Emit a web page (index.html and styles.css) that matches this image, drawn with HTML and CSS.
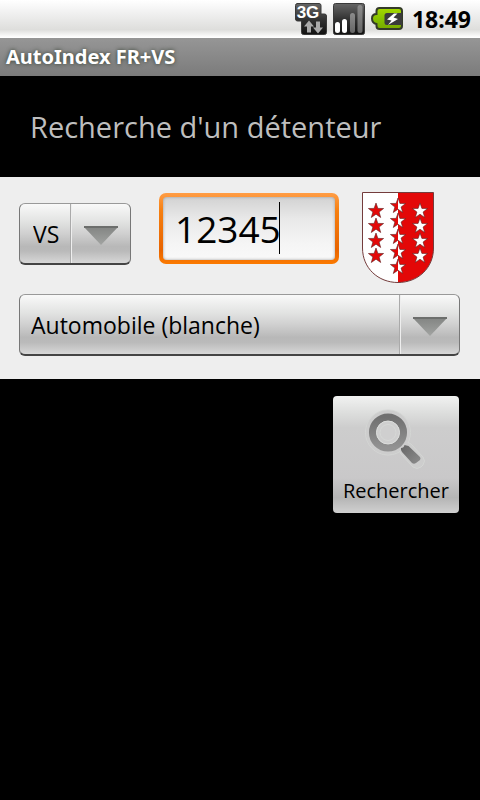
FILE: index.html
```html
<!DOCTYPE html>
<html lang="fr">
<head>
<meta charset="utf-8">
<meta name="viewport" content="width=device-width">
<title>AutoIndex FR+VS</title>
<link rel="stylesheet" href="styles.css">
</head>
<body>
<div class="status-bar">
  <svg class="status-icon" viewBox="0 0 32 32" aria-hidden="true">
    <defs>
      <linearGradient id="dark" x1="0" y1="0" x2="0" y2="1"><stop offset="0" stop-color="#666"/><stop offset=".5" stop-color="#333"/><stop offset="1" stop-color="#111"/></linearGradient>
      <linearGradient id="bar" x1="0" y1="0" x2="0" y2="1"><stop offset="0" stop-color="#8c8c8c"/><stop offset="1" stop-color="#666"/></linearGradient>
    </defs>
    <path d="M2 .5h22q2 0 2 2V11h3.500q2 0 2 2v16.500q0 2-2 2H8.500q-2 0-2-2V18H2.500q-2 0-2-2V2.500q0-2 2-2z" fill="url(#dark)" stroke="#3a3a3a"/>
    <text class="network" x="13" y="15">3G</text>
    <path d="M14 17.500l5 6h-3v6h-4v-6H9zM23 30.500l-5-6h3v-6h4v6h3z" fill="#aaa"/>
  </svg>
  <svg class="status-icon" viewBox="0 0 32 32" aria-hidden="true">
    <rect x=".5" y=".5" width="31" height="31" rx="2" fill="url(#dark)" stroke="#3a3a3a"/>
    <rect x="2" y="19" width="5" height="11" rx="2.500" fill="#fff"/>
    <rect x="9" y="16" width="5" height="14" rx="2.500" fill="#fff"/>
    <rect x="17" y="10" width="5" height="20" rx="2.500" fill="url(#bar)"/>
    <rect x="24.500" y="2" width="5" height="28" rx="2.500" fill="url(#bar)"/>
  </svg>
  <svg class="status-icon" viewBox="0 0 32 32" aria-hidden="true">
    <defs><linearGradient id="green" x1="0" y1="0" x2="0" y2="1"><stop offset="0" stop-color="#a5d900"/><stop offset=".6" stop-color="#82bd00"/><stop offset="1" stop-color="#78a800"/></linearGradient></defs>
    <path d="M8.500 5H28q3 0 3 3v15q0 3-3 3H8.500q-3 0-3-3v-2Q1 20 1 15.500T5.500 11V8q0-3 3-3z" fill="url(#green)" stroke="#333a28" stroke-width="2"/>
    <path d="M16 10h15v12H16q-2.500 0-2.500-2.500v-7Q13.500 10 16 10z" fill="#3a3a3a"/>
    <path d="M23 10.500l-7 6 4.500 1-3.500 4.500 10-6-4.500-1.500 4-4z" fill="#fff"/>
  </svg>
  <time class="clock">18:49</time>
</div>
<header class="title-bar">AutoIndex FR+VS</header>
<main>
  <h1 class="heading">Recherche d'un détenteur</h1>
  <form id="search" class="panel">
    <div class="plate-row">
      <div class="spinner spinner-short">
        <select aria-label="Canton"><option>VS</option><option>FR</option></select>
        <span class="spinner-arrow"><svg viewBox="0 0 34 19" aria-hidden="true"><path d="M0 1h34L17 19z" fill="url(#arrow)"/><path d="M0 1h34" stroke="#6c6e6c" stroke-width="2"/></svg></span>
      </div>
      <div class="number-field">
        <input type="text" inputmode="numeric" aria-label="Numéro de plaque" value="12345">
        <span class="caret"></span>
      </div>
      <svg class="shield" viewBox="0 0 72 91" role="img" aria-label="Valais">
        <defs>
          <linearGradient id="arrow" x1="0" y1="0" x2="0" y2="1"><stop offset="0" stop-color="#838583"/><stop offset="1" stop-color="#a2a4a2"/></linearGradient>
          <path id="star" d="M0-8L1.900-2.600 7.600-2.500 3.100 1 4.700 6.500 0 3.200-4.700 6.500-3.100 1-7.600-2.500-1.900-2.600z"/>
          <clipPath id="left"><path d="M0 0h36v91H0z"/></clipPath>
          <clipPath id="right"><path d="M36 0h36v91H36z"/></clipPath>
          <g id="column"><use href="#star" y="14"/><use href="#star" y="29"/><use href="#star" y="45"/><use href="#star" y="60"/><use href="#star" y="75"/></g>
          <g id="side"><use href="#star" y="19"/><use href="#star" y="34"/><use href="#star" y="49"/><use href="#star" y="64"/></g>
        </defs>
        <path d="M.5.5H36v90C16 90 .5 76 .5 56z" fill="#fff"/>
        <path d="M36 .5h35.500V56C71.500 76 56 90 36 90.500z" fill="#e30808"/>
        <path d="M.5.5h71V56C71.500 76 56 90.500 36 90.500S.5 76 .5 56z" fill="none" stroke="#743c3c"/>
        <g stroke="#5c1c1c" stroke-width=".6">
          <use href="#side" x="14" fill="#e30808"/>
          <use href="#side" x="58" fill="#fff"/>
          <g clip-path="url(#left)"><use href="#column" x="36" fill="#e30808"/></g>
          <g clip-path="url(#right)"><use href="#column" x="36" fill="#fff"/></g>
        </g>
      </svg>
    </div>
    <div class="spinner">
      <select aria-label="Type de véhicule"><option>Automobile (blanche)</option></select>
      <span class="spinner-arrow"><svg viewBox="0 0 34 19" aria-hidden="true"><path d="M0 1h34L17 19z" fill="url(#arrow)"/><path d="M0 1h34" stroke="#6c6e6c" stroke-width="2"/></svg></span>
    </div>
  </form>
  <div class="actions">
    <button class="search-button" type="submit" form="search">
      <svg viewBox="0 0 62 62" aria-hidden="true">
        <defs>
          <linearGradient id="glass" x1="0" y1="0" x2="0" y2="1"><stop offset="0" stop-color="#707070"/><stop offset="1" stop-color="#929292"/></linearGradient>
          <linearGradient id="handle" x1="0" y1="0" x2="1" y2="1"><stop offset="0" stop-color="#666"/><stop offset="1" stop-color="#8d8d8d"/></linearGradient>
        </defs>
        <g fill="#cdcdcd" stroke="#d4d6d4" stroke-linejoin="round">
          <circle cx="23" cy="24.500" r="22.500"/>
          <path d="M42 34l4 2 12 13q3 4 0 8l-2 2q-4 3-8 0L36 46l-2-4"/>
        </g>
        <circle cx="23" cy="24.500" r="22" fill="#cdcdcd"/>
        <circle cx="23" cy="24.500" r="15.300" fill="none" stroke="url(#glass)" stroke-width="7.500"/>
        <circle cx="23" cy="24.500" r="11.500" fill="#cfcfcf" stroke="#dcdedc"/>
        <circle cx="23" cy="24.500" r="8" fill="none" stroke="#d6d8d6"/>
        <path d="M36 42v-2q3 0 3.500-3l4 1L55 49q1 1.500 0 3l-4 3q-2 1.500-4 0L37 44z" fill="url(#handle)"/>
      </svg>
      <span>Rechercher</span>
    </button>
  </div>
</main>
</body>
</html>
```
FILE: styles.css
```css
* { box-sizing: border-box; }

body {
  margin: 0;
  min-height: 100vh;
  background: #000;
  color: #000;
  font-family: "Open Sans", "Noto Sans", sans-serif;
}

.status-bar {
  display: flex;
  align-items: center;
  justify-content: flex-end;
  gap: 6px;
  height: 38px;
  padding-right: 9px;
  background: linear-gradient(#fff 0, #f2f2f2 30%, #dededc 78%, #fff 98%);
}

.status-icon { width: 32px; height: 32px; }

.network {
  fill: #fff;
  font: 700 17px "Liberation Sans", sans-serif;
  text-anchor: middle;
}

.clock {
  margin-left: 3px;
  font-family: "Noto Sans", sans-serif;
  font-size: 23px;
  font-weight: 700;
}

.title-bar {
  height: 38px;
  padding: 0 6px;
  background: linear-gradient(#969696, #7b7b7b);
  color: #fff;
  font-family: "Noto Sans", sans-serif;
  font-size: 20px;
  font-weight: 700;
  line-height: 37px;
  text-shadow: 0 0 4px #2f3a2c;
}

.heading {
  margin: 0;
  padding: 30px;
  color: #bebebe;
  font-size: 29px;
  font-weight: 400;
  line-height: 41px;
}

.panel {
  padding: 15px 20px 23px 19px;
  background: #eee;
}

.plate-row {
  display: flex;
  align-items: flex-start;
  margin-bottom: 11px;
}

.spinner {
  position: relative;
  height: 62px;
  border: 1px solid #777;
  border-top-color: #999;
  border-bottom: 2px solid #444;
  border-radius: 6px;
  background: linear-gradient(#f9f9f9, #e2e3e2 30%, #d0d0d0 50%, #b8b8b8 72%, #bababa 80%, #d7d7d7);
}

.spinner-short {
  width: 112px;
  margin: 11px 28px 0 0;
}

.spinner select {
  width: 100%;
  height: 100%;
  padding: 0 72px 0 11px;
  border: 0;
  appearance: none;
  background: none;
  color: #000;
  font: 23px "Open Sans", "Noto Sans", sans-serif;
}

.spinner-short select { padding: 0 60px 0 13px; }

.spinner-arrow {
  position: absolute;
  top: 0;
  right: 0;
  bottom: 0;
  display: grid;
  place-items: center;
  width: 60px;
  padding-top: 4px;
  border-left: 1px solid #aaa;
  box-shadow: inset 1px 0 #eee;
  pointer-events: none;
}

.spinner-arrow svg { width: 34px; height: 19px; }

.number-field {
  position: relative;
  flex: 0 1 180px;
  height: 71px;
  margin-top: 1px;
  padding: 4px;
  border-radius: 7px;
  background: linear-gradient(#ff9d45, #f67f10 25%, #e86400 80%, #fb7a00);
}

.number-field input {
  display: block;
  width: 100%;
  height: 100%;
  padding: 0 13px 0 12px;
  border: 0;
  border-radius: 4px;
  outline: 0;
  background: linear-gradient(#d2d2d2, #e9e9e9 35%, #f5f5f5 75%, #f9f9f9);
  box-shadow: inset 0 0 3px #999;
  color: #000;
  font: 37px "Open Sans", "Noto Sans", sans-serif;
}

.caret {
  position: absolute;
  top: 9px;
  left: 120px;
  width: 1px;
  height: 52px;
  background: #000;
}

.shield {
  width: 72px;
  height: 91px;
  margin-left: 23px;
}

.actions {
  display: flex;
  justify-content: flex-end;
  padding: 17px 21px;
}

.search-button {
  display: flex;
  flex-direction: column;
  align-items: center;
  width: 126px;
  height: 117px;
  padding: 12px 0 0;
  border: 0;
  border-radius: 4px;
  background: linear-gradient(#f1f2f1, #dcdddc 15%, #cdcdcd 27%, #c9c8c9 70%, #b5b5b5 87%, #d0d0d0);
  color: #000;
  font: 20px/28px "Open Sans", "Noto Sans", sans-serif;
}

.search-button svg {
  width: 62px;
  height: 62px;
  margin-bottom: 7px;
}
```
